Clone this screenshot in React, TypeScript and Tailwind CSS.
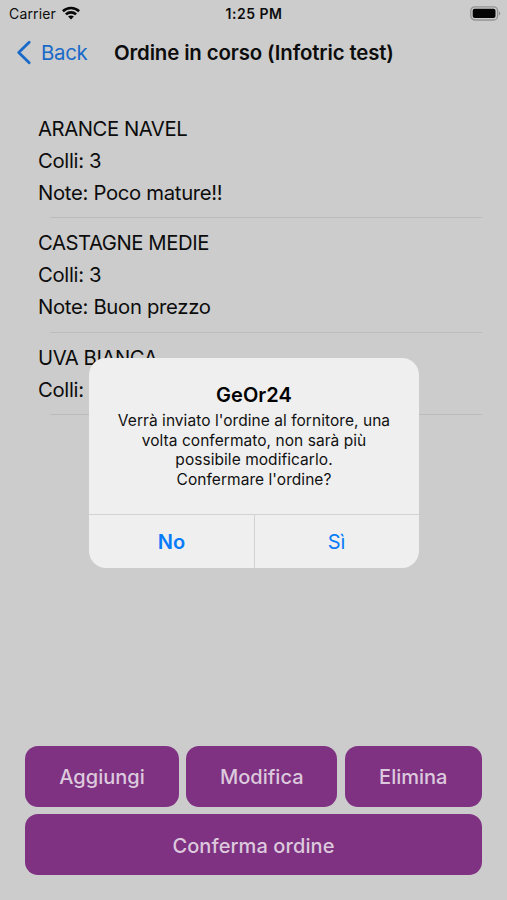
import React from "react";

type Order = { name: string; lines: string[] };

const orders: Order[] = [
  { name: "ARANCE NAVEL", lines: ["Colli: 3", "Note: Poco mature!!"] },
  { name: "CASTAGNE MEDIE", lines: ["Colli: 3", "Note: Buon prezzo"] },
  { name: "UVA BIANCA", lines: ["Colli: 1"] },
];

function WifiIcon() {
  return (
    <svg width="18" height="14" viewBox="0 0 18 14" fill="none" stroke="#080808" strokeWidth="2.6">
      <path d="M0.9 5.2C5.3 .9 12.7 .9 17.1 5.2" />
      <path d="M3.9 8.4C6.7 5.7 11.3 5.7 14.1 8.4" />
      <path d="M9 13.5L6.1 10.6C7.7 9.2 10.3 9.2 11.9 10.6Z" fill="#080808" stroke="none" />
    </svg>
  );
}

function BatteryIcon() {
  return (
    <svg width="31" height="15" viewBox="0 0 31 15">
      <rect x="0.8" y="0.8" width="26.8" height="13.2" rx="4" fill="none" stroke="#929292" strokeWidth="1.3" />
      <rect x="2.7" y="2.7" width="22.8" height="9.4" rx="2" fill="#050505" />
      <path d="M28.8 5.2C30.8 6 30.8 8.8 28.8 9.6Z" fill="#929292" />
    </svg>
  );
}

function StatusBar() {
  return (
    <header className="grid h-[26px] grid-cols-3 items-center pl-[9px] pr-[6px] text-[14px]">
      <div className="flex items-center gap-[6px]">
        <span className="pt-px tracking-[0.15px]">Carrier</span>
        <WifiIcon />
      </div>
      <span className="pr-[2px] pt-px text-center font-semibold tracking-[0.5px]">1:25 PM</span>
      <div className="flex justify-end">
        <BatteryIcon />
      </div>
    </header>
  );
}

function NavBar() {
  return (
    <nav className="flex h-[52px] items-center pt-px text-[20.4px]">
      <div className="flex w-[114px] items-center pl-[16px] text-[#1a6ac9]">
        <svg width="16" height="25" viewBox="0 0 16 25" fill="none" stroke="currentColor" strokeWidth="2.8" strokeLinecap="round" strokeLinejoin="round">
          <path d="M13.2 2.2L2.7 12.5L13.2 22.8" />
        </svg>
        <span className="ml-[9px] pt-px tracking-[-0.3px]">Back</span>
      </div>
      <h1 className="whitespace-nowrap pt-px font-semibold tracking-[-0.13px]">Ordine in corso (Infotric test)</h1>
    </nav>
  );
}

function OrderItem({ order }: { order: Order }) {
  return (
    <li>
      <div className="px-[38px] pb-[8.5px] pt-[8.8px] text-[20.3px] leading-[32px] tracking-[-0.45px]">
        <p>{order.name}</p>
        {order.lines.map((l) => (
          <p key={l} className="tracking-[-0.31px]">
            {l}
          </p>
        ))}
      </div>
      <div className="ml-[50px] mr-[25px] h-px bg-[#bcbcbc]" />
    </li>
  );
}

function PurpleButton({ label, className }: { label: string; className: string }) {
  return (
    <button className={`h-[61px] rounded-[13px] bg-[#7f3282] pt-[2px] text-[20px] font-medium text-[#dcc9dd] ${className}`}>
      {label}
    </button>
  );
}

function Alert() {
  return (
    <div role="alertdialog" className="absolute left-[89px] top-[358px] flex h-[210px] w-[330px] flex-col overflow-hidden rounded-[17px] bg-[#efefef]">
      <div className="flex-1 pt-[24px] text-center">
        <h2 className="text-[20px] font-semibold leading-[26px] tracking-[0.05px] text-black">GeOr24</h2>
        <p className="mt-[3px] text-[15.5px] leading-[19.5px] tracking-[0.05px] text-[#111]">
          Verrà inviato l'ordine al fornitore, una
          <br />
          volta confermato, non sarà più
          <br />
          possibile modificarlo.
          <br />
          Confermare l'ordine?
        </p>
      </div>
      <div className="flex h-[54px] border-t border-[#d2d2d2] text-[20px] text-[#087bfa]">
        <button className="w-[166px] border-r border-[#d2d2d2] font-semibold">No</button>
        <button className="flex-1 pr-px">Sì</button>
      </div>
    </div>
  );
}

export default function App() {
  return (
    <div className="relative flex h-[900px] w-[507px] flex-col overflow-hidden bg-[#cccccc] font-['Inter','Liberation_Sans',sans-serif] text-[#0c0c0c]">
      <StatusBar />
      <NavBar />
      <ul className="mt-[26.2px] flex-1">
        {orders.map((o) => (
          <OrderItem key={o.name} order={o} />
        ))}
      </ul>
      <footer className="flex flex-col gap-[7.5px] px-[25px] pb-[24.6px]">
        <div className="flex justify-between">
          <PurpleButton label="Aggiungi" className="w-[154px]" />
          <PurpleButton label="Modifica" className="w-[151px]" />
          <PurpleButton label="Elimina" className="w-[137.5px]" />
        </div>
        <PurpleButton label="Conferma ordine" className="w-full tracking-[0.1px]" />
      </footer>
      <Alert />
    </div>
  );
}
